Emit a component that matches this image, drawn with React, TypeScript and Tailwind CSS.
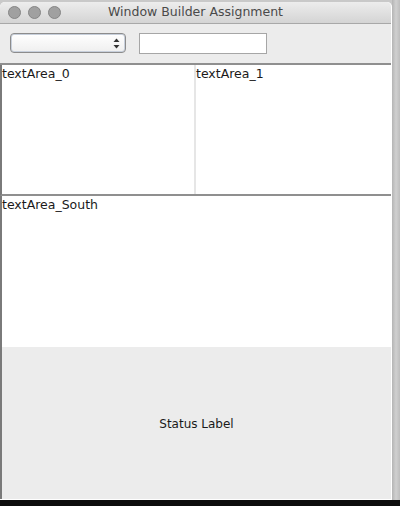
export default function App() {
  return (
    <div
      className="flex h-[506px] w-[400px] flex-col bg-[#0d0d0d] text-[12px] text-[#1a1a1a]"
      style={{ fontFamily: '"DejaVu Sans", "Noto Sans", sans-serif' }}
    >
      <div className="flex h-[500px]">
        <div className="flex w-[392px] flex-col bg-[#c9c9c9] pt-[2px]">
          <div className="flex flex-1 flex-col overflow-hidden rounded-t-[5px] border-r border-b border-white bg-white">
            {/* title bar */}
            <div className="relative flex h-[22px] shrink-0 items-center border-b border-[#a8a8a8] bg-gradient-to-b from-[#ededed] to-[#d4d4d4]">
              <div className="flex items-center gap-[7px] pl-[8px]">
                <span className="h-[13px] w-[13px] rounded-full border border-[#858585] bg-[#a0a0a0]" />
                <span className="h-[13px] w-[13px] rounded-full border border-[#858585] bg-[#a0a0a0]" />
                <span className="h-[13px] w-[13px] rounded-full border border-[#858585] bg-[#a0a0a0]" />
              </div>
              <span className="absolute inset-x-0 text-center text-[12.5px] text-[#4a4a4a]">
                Window Builder Assignment
              </span>
            </div>

            {/* toolbar */}
            <div className="flex h-[41px] shrink-0 items-start gap-[13px] border-b-2 border-[#8f8f8f] bg-[#ececec] pt-[9px] pl-[10px]">
              <div className="flex h-[20px] w-[116px] items-center justify-end rounded-[4px] border border-[#8c8c8c] bg-gradient-to-b from-white to-[#efefef] pr-[5px] shadow-[inset_0_0_0_1px_#c8d0dc]">
                <svg width="7" height="11" viewBox="0 0 7 11">
                  <path d="M3.5 0.5 L6.5 4 L0.5 4 Z" fill="#333" />
                  <path d="M3.5 10.5 L6.5 7 L0.5 7 Z" fill="#333" />
                </svg>
              </div>
              <div className="h-[21px] w-[128px] border border-[#a6a6a6] bg-white" />
            </div>

            {/* text areas */}
            <div className="flex h-[131px] shrink-0 border-b-2 border-[#8f8f8f] border-l-2 border-l-[#7a7a7a]">
              <div className="w-[194px] border-r-2 border-[#e6e6e6] bg-white pt-[1px] text-[12.5px] leading-[16px]">
                textArea_0
              </div>
              <div className="flex-1 bg-white pt-[1px] text-[12.5px] leading-[16px]">
                textArea_1
              </div>
            </div>

            <div className="h-[151px] shrink-0 border-l-2 border-l-[#7a7a7a] bg-white pt-[1px] text-[12.5px] leading-[16px]">
              textArea_South
            </div>

            <div className="flex flex-1 items-center justify-center border-l-2 border-l-[#7a7a7a] bg-[#ececec]">
              <span className="mt-[2px]">Status Label</span>
            </div>
          </div>
        </div>
        <div className="w-[8px] bg-gradient-to-r from-[#b5b5b5] via-[#d0d0d0] to-[#bdbdbd]" />
      </div>
      <div className="h-[6px] bg-[#0d0d0d]" />
    </div>
  );
}
